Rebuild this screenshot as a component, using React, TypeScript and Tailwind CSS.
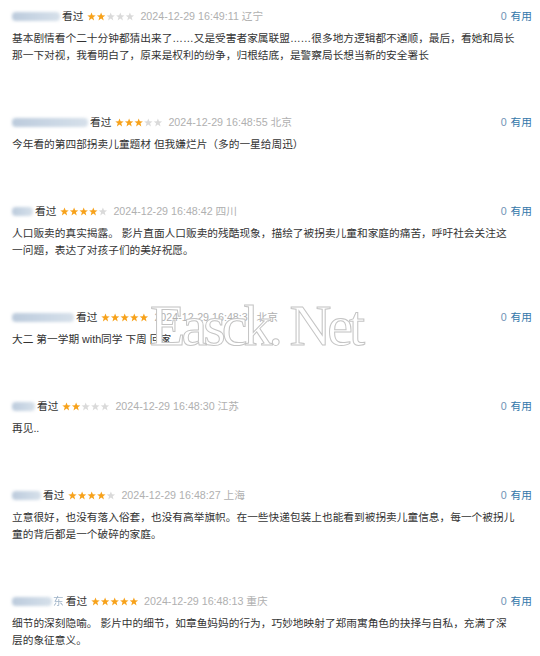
import React from "react";

type Comment = {
  nameWidth: number;
  tail?: string;
  stars: number;
  time: string;
  text: string;
};

const comments: Comment[] = [
  {
    nameWidth: 48,
    stars: 2,
    time: "2024-12-29 16:49:11 辽宁",
    text: "基本剧情看个二十分钟都猜出来了……又是受害者家属联盟……很多地方逻辑都不通顺，最后，看她和局长那一下对视，我看明白了，原来是权利的纷争，归根结底，是警察局长想当新的安全署长",
  },
  {
    nameWidth: 76,
    stars: 3,
    time: "2024-12-29 16:48:55 北京",
    text: "今年看的第四部拐卖儿童题材 但我嫌烂片（多的一星给周迅）",
  },
  {
    nameWidth: 21,
    stars: 4,
    time: "2024-12-29 16:48:42 四川",
    text: "人口贩卖的真实揭露。 影片直面人口贩卖的残酷现象，描绘了被拐卖儿童和家庭的痛苦，呼吁社会关注这一问题，表达了对孩子们的美好祝愿。",
  },
  {
    nameWidth: 62,
    stars: 5,
    time: "2024-12-29 16:48:37 北京",
    text: "大二 第一学期 with同学 下周 回家",
  },
  {
    nameWidth: 23,
    stars: 2,
    time: "2024-12-29 16:48:30 江苏",
    text: "再见..",
  },
  {
    nameWidth: 29,
    stars: 4,
    time: "2024-12-29 16:48:27 上海",
    text: "立意很好，也没有落入俗套，也没有高举旗帜。在一些快递包装上也能看到被拐卖儿童信息，每一个被拐儿童的背后都是一个破碎的家庭。",
  },
  {
    nameWidth: 40,
    tail: "东",
    stars: 5,
    time: "2024-12-29 16:48:13 重庆",
    text: "细节的深刻隐喻。 影片中的细节，如章鱼妈妈的行为，巧妙地映射了郑雨寓角色的抉择与自私，充满了深层的象征意义。",
  },
];

const starPath =
  "M4.5 0.4 L5.6 3.3 L8.7 3.4 L6.3 5.3 L7.1 8.4 L4.5 6.6 L1.9 8.4 L2.7 5.3 L0.3 3.4 L3.4 3.3 Z";

function Stars({ value }: { value: number }) {
  return (
    <svg width="48" height="9" viewBox="0 0 48 9" className="shrink-0">
      {[0, 1, 2, 3, 4].map((i) => (
        <path
          key={i}
          d={starPath}
          transform={`translate(${i * 9.6} 0)`}
          fill={i < value ? "#f7a21b" : "#dadada"}
        />
      ))}
    </svg>
  );
}

function Item({ c }: { c: Comment }) {
  return (
    <div className="pb-[50.5px] last:pb-3">
      <div className="flex h-4 items-center justify-between">
        <div className="flex items-center">
          <div
            className="h-[9px] rounded-sm bg-gradient-to-r from-[#bccbdc] via-[#c9d6e4] to-[#d6e0ea] blur-[1.5px]"
            style={{ width: c.nameWidth }}
          />
          {c.tail && <span className="ml-[1px] text-[#9fb3c8] blur-[0.4px]">{c.tail}</span>}
          <span className="ml-[2px] text-[#333]">看过</span>
          <span className="ml-[4px] flex items-center">
            <Stars value={c.stars} />
          </span>
          <span className="ml-[5px] text-[#b0b0b0]">{c.time}</span>
        </div>
        <div className="flex items-center gap-[4px]">
          <span className="text-[#6f93b6]">0</span>
          <span className="text-[#3377aa]">有用</span>
        </div>
      </div>
      <p className="mt-[5.5px] w-[505px] leading-[17px] text-[#333]">{c.text}</p>
    </div>
  );
}

export default function App() {
  return (
    <div className="relative h-[656px] w-[540px] overflow-hidden bg-white pl-3 pr-2 pt-2 text-[10.7px] [font-family:'Liberation_Sans','Noto_Sans_CJK_SC',sans-serif]">
      {comments.map((c, i) => (
        <Item key={i} c={c} />
      ))}
      <div className="pointer-events-none absolute left-[150px] top-[297px] text-[58px] leading-none tracking-[-4px] text-white [-webkit-text-stroke:1px_#c4c4c4] [font-family:'Liberation_Serif',serif]">
        Easck. Net
      </div>
    </div>
  );
}
